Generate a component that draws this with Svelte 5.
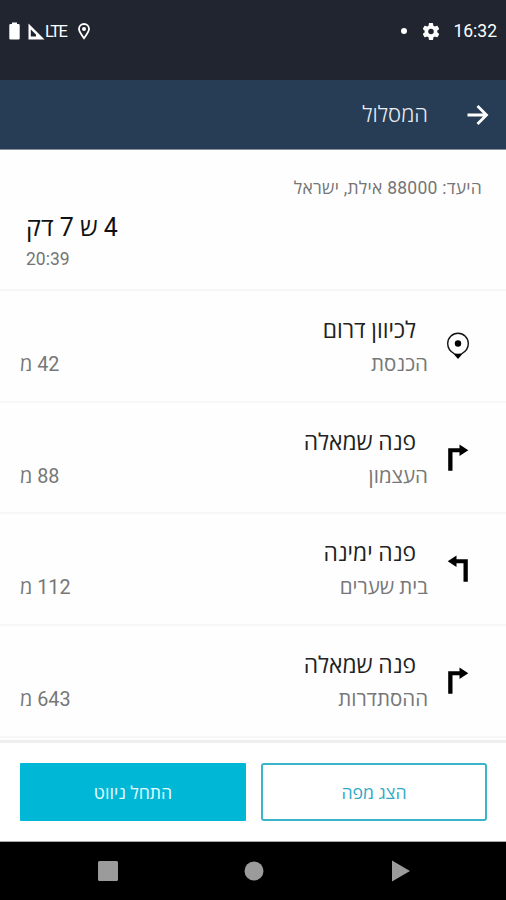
<script>
  const destination = 'היעד: 88000 אילת, ישראל';
  const duration = '4 ש 7 דק';
  const arrival = '20:39';

  const steps = [
    { icon: 'pin', action: 'לכיוון דרום', street: 'הכנסת', distance: '42 מ' },
    { icon: 'turn', action: 'פנה שמאלה', street: 'העצמון', distance: '88 מ' },
    { icon: 'turn-flip', action: 'פנה ימינה', street: 'בית שערים', distance: '112 מ' },
    { icon: 'turn', action: 'פנה שמאלה', street: 'ההסתדרות', distance: '643 מ' }
  ];
</script>

<div class="screen" dir="rtl">
  <div class="status">
    <span class="clock">16:32</span>
    <svg class="gear" width="16" height="17" viewBox="2.500 2 19 20">
      <path fill="#fff" fill-rule="evenodd" d="M19.4 13a7.5 7.5 0 0 0 0-2l2.1-1.6a.5.5 0 0 0 .1-.7l-2-3.4a.5.5 0 0 0-.6-.2l-2.5 1a7.3 7.3 0 0 0-1.7-1l-.4-2.6a.5.5 0 0 0-.5-.5h-4a.5.5 0 0 0-.5.5L9.1 5.100a7.7 7.7 0 0 0-1.7 1l-2.5-1a.5.5 0 0 0-.6.2l-2 3.4a.5.5 0 0 0 .1.7L4.500 11a7.5 7.5 0 0 0 0 2l-2.100 1.600a.5.5 0 0 0-.1.7l2 3.4c.1.2.4.3.6.2l2.5-1c.5.4 1.100.7 1.700 1l.4 2.600c0 .3.2.5.5.5h4c.3 0 .5-.2.5-.5l.4-2.600a7.300 7.300 0 0 0 1.700-1l2.500 1c.2.1.5 0 .6-.2l2-3.400a.5.5 0 0 0-.1-.7zM12 15.300a3.300 3.300 0 1 1 0-6.600 3.300 3.300 0 0 1 0 6.600z" />
    </svg>
    <span class="dot"></span>
    <svg class="place" width="12" height="17" viewBox="0 0 12 17">
      <path fill="none" stroke="#fff" stroke-width="1.8" d="M6 15.200C3 11.200 1 8.500 1 6a5 5 0 0 1 10 0c0 2.500-2 5.200-5 9.200z" />
      <circle cx="6" cy="6" r="2" fill="#fff" />
    </svg>
    <span class="lte">LTE</span>
    <svg class="signal" width="17" height="17" viewBox="0 0 17 17">
      <path fill="#fff" fill-rule="evenodd" d="M.5.5L16.500 16.500H.5zM2.800 6.500v7H8V11.500z" />
    </svg>
    <svg class="battery" width="11" height="18" viewBox="0 0 11 18">
      <path fill="#fff" d="M3 .5h5v1.500h1.500a1.200 1.200 0 0 1 1.200 1.200V16.600a1 1 0 0 1-1 1H1.300a1 1 0 0 1-1-1V3.200A1.200 1.200 0 0 1 1.500 2H3z" />
    </svg>
  </div>

  <header class="toolbar">
    <svg width="22" height="22" viewBox="0 0 22 22">
      <path fill="none" stroke="#fff" stroke-width="2.8" d="M.5 11H19.500M10.500 2l9 9-9 9" />
    </svg>
    <h1>המסלול</h1>
  </header>

  <section class="summary">
    <p class="destination">{destination}</p>
    <p class="duration">{duration}</p>
    <p class="arrival">{arrival}</p>
  </section>

  <ul class="steps">
    {#each steps as step}
      <li>
        <div class="icon">
          {#if step.icon === 'pin'}
            <svg width="24" height="28" viewBox="0 0 24 28">
              <path fill="none" stroke="#111" stroke-width="1.4" d="M8 21.500C3.500 19 1.700 15.500 1.700 11.500a10.300 10.300 0 0 1 20.600 0c0 4-1.800 7.500-6.300 10" />
              <path fill="#000" d="M6.500 20.800q5.500 2 11 0L12 27z" />
              <circle cx="12" cy="11.500" r="3.200" fill="#000" />
            </svg>
          {:else}
            <svg class:flip={step.icon === 'turn-flip'} width="24" height="28" viewBox="0 0 24 28">
              <path d="M2.200 26.800V4.200H13.500V.5L22.300 6.200 13.500 12V8.200H6.500V26.800z" />
            </svg>
          {/if}
        </div>
        <div class="text">
          <p class="action">{step.action}</p>
          <p class="street">{step.street}</p>
        </div>
        <span class="distance">{step.distance}</span>
      </li>
    {/each}
  </ul>

  <div class="actions">
    <button class="outline">הצג מפה</button>
    <button class="filled">התחל ניווט</button>
  </div>

  <nav class="navbar">
    <svg width="20" height="22" viewBox="0 0 20 22"><path fill="#9b9b9b" d="M1 .5L19 11 1 21.500z" /></svg>
    <svg class="home" width="20" height="20" viewBox="0 0 20 20"><circle cx="10" cy="10" r="9.500" fill="#9b9b9b" /></svg>
    <svg width="20" height="20" viewBox="0 0 20 20"><rect width="20" height="20" rx="1.500" fill="#9b9b9b" /></svg>
  </nav>
</div>

<style>
  :global(body) {
    margin: 0;
    background: #fff;
  }

  .screen {
    display: flex;
    flex-direction: column;
    width: 506px;
    height: 900px;
    overflow: hidden;
    background: #fefefe;
    font-family: Roboto, 'Open Sans', 'Noto Sans', 'DejaVu Sans', sans-serif;
  }

  h1, p, ul {
    margin: 0;
    padding: 0;
    font-weight: 400;
  }

  .status {
    display: flex;
    align-items: center;
    box-sizing: border-box;
    height: 80px;
    padding: 0 9px 18px;
    background: #20252f;
    color: #fff;
  }

  .clock {
    font-size: 17.5px;
    line-height: 20px;
  }

  .gear {
    margin-right: 14px;
  }

  .dot {
    width: 6px;
    height: 6px;
    margin-right: 16px;
    border-radius: 50%;
    background: #fff;
  }

  .place {
    margin-right: auto;
  }

  .lte {
    margin-right: 12px;
    font-size: 16.5px;
    letter-spacing: -1.5px;
  }

  .battery {
    margin-right: 8px;
  }

  .toolbar {
    display: flex;
    align-items: center;
    box-sizing: border-box;
    height: 70px;
    padding: 1px 17px 0 0;
    border-bottom: 1px solid #8a8fa0;
    background: #273d55;
    color: #e9edf3;
  }

  .toolbar h1 {
    margin-right: 39px;
    font-size: 22px;
    font-weight: 300;
    line-height: 28px;
  }

  .summary {
    display: flex;
    flex-direction: column;
    box-sizing: border-box;
    height: 141px;
    padding: 26px 24px 0 26px;
    border-bottom: 2px solid #f6f6f6;
    color: #757575;
  }

  .destination {
    font-size: 17.5px;
    line-height: 24px;
    letter-spacing: 0.25px;
  }

  .duration {
    align-self: flex-end;
    margin-top: 12px;
    color: #111;
    font-size: 25px;
    line-height: 32px;
  }

  .arrival {
    align-self: flex-end;
    margin-top: 4px;
    font-size: 17.5px;
    line-height: 22px;
  }

  .steps {
    height: 449px;
    list-style: none;
  }

  .steps li {
    display: flex;
    box-sizing: border-box;
    height: 111.7px;
    padding: 23px 36px 0 20px;
    border-bottom: 2px solid #f7f7f7;
  }

  .icon {
    width: 24px;
    padding-top: 18px;
  }

  .icon svg {
    display: block;
  }

  .icon .flip {
    transform: scaleX(-1);
  }

  .text {
    flex: 1;
    margin-right: 18px;
  }

  .action {
    margin-right: 12px;
    color: #222;
    font-size: 22.8px;
    line-height: 34px;
  }

  .street,
  .distance {
    color: #777;
    font-size: 20.5px;
    line-height: 33px;
  }

  .distance {
    margin-top: 34px;
    font-size: 19.8px;
  }

  .actions {
    display: grid;
    grid-template-columns: 1fr 1fr;
    gap: 15px;
    box-sizing: border-box;
    height: 102px;
    padding: 20px 19px 20px 20px;
    border-top: 3px solid #eee;
    border-bottom: 1px solid #aaa;
    background: #fff;
  }

  .actions button {
    padding: 0;
    border: 2px solid #3bb3ca;
    border-radius: 3px;
    background: #fff;
    color: #2faac6;
    font-family: inherit;
    font-size: 17.7px;
  }

  .actions .filled {
    border: 0;
    border-radius: 1px;
    background: #00b8d6;
    color: #e6fbff;
    font-weight: 500;
  }

  .navbar {
    display: flex;
    flex: 1;
    align-items: center;
    justify-content: space-between;
    padding: 0 95px 0 98px;
    background: #000;
  }

  .home {
    margin-left: -2px;
    margin-right: 0;
  }
</style>
